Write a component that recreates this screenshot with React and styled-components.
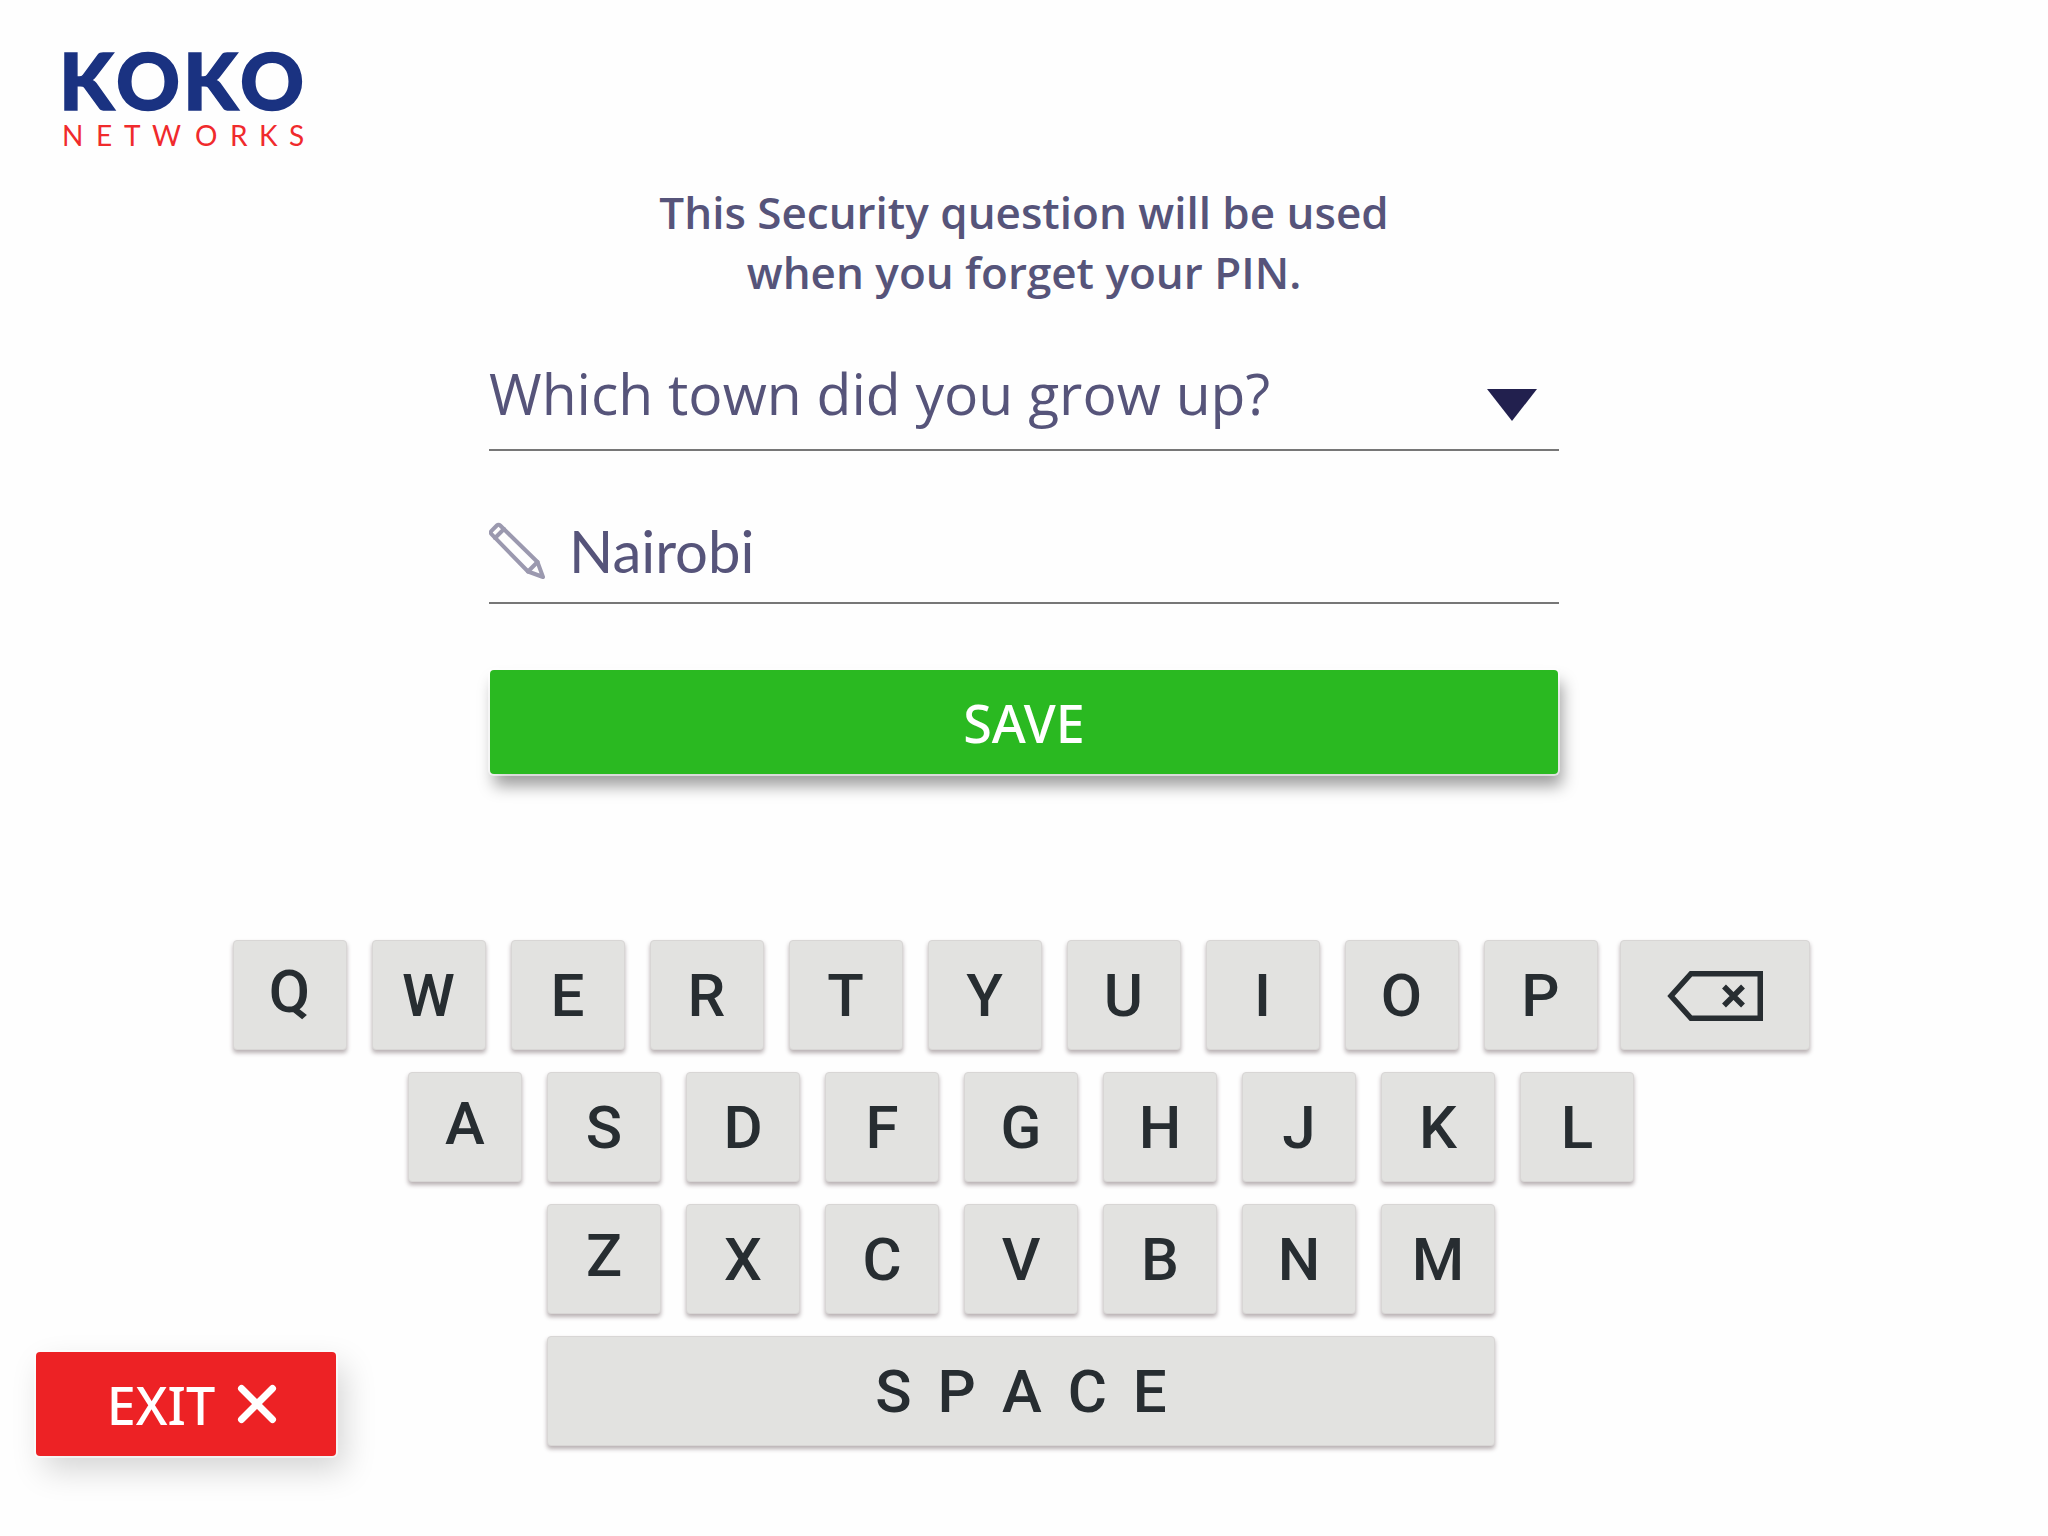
import React, { useState } from "react";
import styled, { createGlobalStyle } from "styled-components";

const color = {
  ink: "#56547a",
  navy: "#22204e",
  brand: "#1a3281",
  brandRed: "#f02a2c",
  green: "#2ab921",
  red: "#ed2225",
  key: "#e2e2e0",
  keyInk: "#272d31",
  line: "#777777",
  pencil: "#9b99af",
};

const GlobalStyle = createGlobalStyle`
  *, *::before, *::after { box-sizing: border-box; }
  body {
    margin: 0;
    background: #fefefe;
    color: ${color.ink};
    font-family: "Open Sans", "Noto Sans", sans-serif;
  }
  button, input, select { font: inherit; color: inherit; }
`;

const Page = styled.div`
  min-height: 100vh;
  display: flex;
  flex-direction: column;
  padding: 24px 36px 80px;
`;

const Header = styled.header`
  display: flex;
  padding-left: 14px;
`;

const Logo = styled.svg`
  display: block;
  width: 270px;
  height: 128px;
`;

const Form = styled.form`
  width: 100%;
  max-width: 1070px;
  margin: 30px auto 0;
  display: flex;
  flex-direction: column;
`;

const Title = styled.h1`
  margin: 0 0 34px;
  text-align: center;
  font-size: 44px;
  line-height: 60px;
  font-weight: 600;
`;

const Field = styled.div`
  display: flex;
  align-items: center;
  gap: 22px;
  border-bottom: 2px solid ${color.line};
`;

const QuestionField = styled(Field)`
  height: 115px;
  padding-right: 22px;
`;

const AnswerField = styled(Field)`
  height: 106px;
  margin-top: 47px;
`;

const QuestionSelect = styled.select`
  flex: 1;
  min-width: 0;
  height: 100%;
  padding: 0;
  border: 0;
  outline: 0;
  appearance: none;
  background: transparent;
  font-size: 57px;
`;

const Arrow = styled.svg`
  width: 50px;
  height: 32px;
  margin-top: 24px;
  pointer-events: none;
`;

const PencilIcon = styled.svg`
  flex: none;
  width: 58px;
  height: 58px;
`;

const AnswerInput = styled.input`
  flex: 1;
  min-width: 0;
  height: 100%;
  padding: 0;
  border: 0;
  outline: 0;
  background: transparent;
  font-family: Lato, sans-serif;
  font-size: 58px;
`;

const ActionButton = styled.button`
  height: 104px;
  display: flex;
  align-items: center;
  justify-content: center;
  gap: 22px;
  padding: 0;
  border: 0;
  border-radius: 4px;
  color: #fff;
  font-family: "Noto Sans", sans-serif;
  font-size: 52px;
  font-weight: 500;
  cursor: pointer;
`;

const SaveButton = styled(ActionButton)`
  margin: 66px 1px 0;
  background: ${color.green};
  box-shadow: 0 0 0 2px rgba(255, 255, 255, 0.6), 4px 12px 16px rgba(0, 0, 0, 0.38);
`;

const ExitButton = styled(ActionButton)`
  grid-area: 1 / 1;
  align-self: end;
  justify-self: start;
  width: 300px;
  padding-left: 12px;
  background: ${color.red};
  box-shadow: 0 0 0 2px rgba(255, 255, 255, 0.6), 8px 14px 32px rgba(0, 0, 0, 0.17);
`;

const CrossIcon = styled.svg`
  width: 40px;
  height: 40px;
`;

const Bottom = styled.div`
  display: grid;
  margin-top: 166px;
`;

const Keyboard = styled.div`
  grid-area: 1 / 1;
  display: flex;
  flex-direction: column;
  align-items: center;
  gap: 22px;
  padding: 0 6px 10px 0;
`;

const KeyRow = styled.div`
  display: flex;
  gap: 22px;
`;

const LetterGroup = styled.div`
  display: flex;
  gap: 25px;
`;

const Key = styled.button`
  width: ${(p) => p.$width || 114}px;
  height: 110px;
  display: flex;
  align-items: center;
  justify-content: center;
  gap: 26px;
  padding: 2px 0 0;
  border: 1px solid #d8d6d5;
  border-radius: 4px;
  background: ${color.key};
  color: ${color.keyInk};
  box-shadow: 0 3px 4px rgba(60, 40, 45, 0.36);
  font-family: Roboto, sans-serif;
  font-size: 60px;
  font-weight: 500;
  line-height: 72px;
  cursor: pointer;
`;

const LetterKey = styled(Key)`
  &:first-child { padding: 0 0 6px; }
`;

const BackspaceIcon = styled.svg`
  width: 96px;
  height: 50px;
`;

const QUESTIONS = [
  "Which town did you grow up?",
  "What was your first school?",
  "What is your favourite food?",
];

const ROWS = ["QWERTYUIOP", "ASDFGHJKL", "ZXCVBNM"];

function KokoLogo() {
  return (
    <Logo viewBox="50 24 270 128" role="img" aria-label="KOKO Networks">
      <g
        fill={color.brand}
        stroke={color.brand}
        strokeWidth="1.500"
        fontFamily="Lato, sans-serif"
        fontWeight="900"
        fontSize="79"
      >
        <text x="59 116 183 240" y="110">KOKO</text>
      </g>
      <g fill={color.brandRed} fontFamily="Lato, sans-serif" fontSize="28">
        <text x="62 96 124 152 195 230 259 289" y="146">NETWORKS</text>
      </g>
    </Logo>
  );
}

export default function App() {
  const [question, setQuestion] = useState(QUESTIONS[0]);
  const [answer, setAnswer] = useState("Nairobi");
  const type = (text) => setAnswer((value) => value + text);

  return (
    <Page>
      <GlobalStyle />
      <Header>
        <KokoLogo />
      </Header>

      <Form onSubmit={(event) => event.preventDefault()}>
        <Title>
          This Security question will be used
          <br />
          when you forget your PIN.
        </Title>

        <QuestionField>
          <QuestionSelect
            aria-label="Security question"
            value={question}
            onChange={(event) => setQuestion(event.target.value)}
          >
            {QUESTIONS.map((text) => (
              <option key={text}>{text}</option>
            ))}
          </QuestionSelect>
          <Arrow viewBox="0 0 50 32" aria-hidden="true">
            <path d="M0 0h50L25 32z" fill={color.navy} />
          </Arrow>
        </QuestionField>

        <AnswerField>
          <PencilIcon
            viewBox="1 -1 58 58"
            fill="none"
            stroke={color.pencil}
            strokeWidth="4"
            strokeLinejoin="round"
            strokeLinecap="round"
            aria-hidden="true"
          >
            <path d="M3.500 8.800 8.800 3.500Q10.500 1.800 12.200 3.500L49.500 40 55 55 40 49.500 3.500 12.200Q1.800 10.500 3.500 8.800Z" />
            <path d="M16 7 7 16M49.500 40 40 49.500" />
          </PencilIcon>
          <AnswerInput
            aria-label="Answer"
            value={answer}
            onChange={(event) => setAnswer(event.target.value)}
          />
        </AnswerField>

        <SaveButton type="submit">SAVE</SaveButton>
      </Form>

      <Bottom>
        <Keyboard>
          {ROWS.map((letters, index) => (
            <KeyRow key={letters}>
              <LetterGroup>
                {[...letters].map((letter) => (
                  <LetterKey key={letter} type="button" onClick={() => type(letter)}>
                    {letter}
                  </LetterKey>
                ))}
              </LetterGroup>
              {index === 0 && (
                <Key
                  type="button"
                  $width={190}
                  aria-label="Backspace"
                  onClick={() => setAnswer((value) => value.slice(0, -1))}
                >
                  <BackspaceIcon
                    viewBox="0 0 96 50"
                    fill="none"
                    stroke={color.keyInk}
                    strokeWidth="5.500"
                    aria-hidden="true"
                  >
                    <path d="M24 2.750H93.250V47.250H24L4 25Z" />
                    <path d="M57 15.500 76 34.500M76 15.500 57 34.500" />
                  </BackspaceIcon>
                </Key>
              )}
            </KeyRow>
          ))}
          <Key type="button" $width={948} aria-label="Space" onClick={() => type(" ")}>
            {[..."SPACE"].map((letter) => (
              <span key={letter}>{letter}</span>
            ))}
          </Key>
        </Keyboard>
        <ExitButton type="button">
          EXIT
          <CrossIcon
            viewBox="0 0 40 40"
            stroke="#fff"
            strokeWidth="7"
            strokeLinecap="round"
            aria-hidden="true"
          >
            <path d="M4.500 4.500 35.500 35.500M35.500 4.500 4.500 35.500" />
          </CrossIcon>
        </ExitButton>
      </Bottom>
    </Page>
  );
}
